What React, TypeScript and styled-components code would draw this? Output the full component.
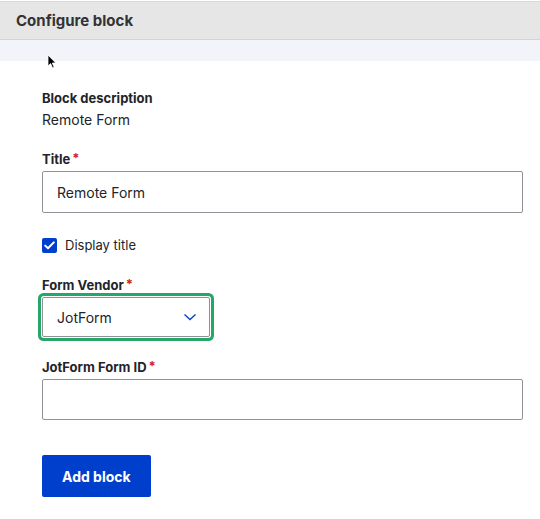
import React from 'react';
import styled, { createGlobalStyle } from 'styled-components';

const GlobalStyle = createGlobalStyle`
  html, body {
    margin: 0;
    padding: 0;
    background: #fff;
    font-family: Inter, "Noto Sans", "Liberation Sans", sans-serif;
    color: #232429;
  }
`;

const Header = styled.div`
  height: 39px;
  margin-top: 1px;
  border-top: 1px solid #d9d9dc;
  border-bottom: 1px solid #d3d4d9;
  background: #e6e6e7;
  display: flex;
  align-items: center;
  padding: 0 16px;
  box-sizing: border-box;
`;

const HeaderTitle = styled.h2`
  margin: 0;
  font-size: 15px;
  font-weight: 700;
  color: #333;
`;

const Band = styled.div`
  height: 21px;
  background: #f3f4f9;
  position: relative;
`;

const Cursor = styled.svg`
  position: absolute;
  left: 47px;
  top: 14px;
`;

const Form = styled.form`
  padding: 28px 17px 0 42px;
  display: flex;
  flex-direction: column;
`;

const Field = styled.div<{ gap?: number }>`
  display: flex;
  flex-direction: column;
  margin-bottom: ${(p) => p.gap ?? 24}px;
`;

const Label = styled.label`
  font-size: 13px;
  font-weight: 700;
  line-height: 18px;
  height: 18px;
  color: #232429;
  margin-bottom: 3px;
  display: flex;
  align-items: center;
`;

const Required = styled.span`
  color: #d72222;
  margin-left: 2px;
  font-size: 13px;
  line-height: 13px;
  margin-top: -1px;
`;

const Value = styled.div`
  font-size: 14px;
  line-height: 20px;
`;

const TextInput = styled.input<{ h?: number }>`
  box-sizing: border-box;
  height: ${(p) => p.h ?? 42}px;
  width: 100%;
  border: 1px solid #919297;
  border-radius: 2px;
  padding: 0 14px;
  font-family: inherit;
  font-size: 14px;
  color: #232429;
  background: #fff;
  outline: none;
`;

const CheckRow = styled.label`
  display: flex;
  align-items: center;
  gap: 8px;
  height: 16px;
  font-size: 13px;
`;

const CheckBox = styled.span`
  width: 15px;
  height: 15px;
  border-radius: 2px;
  background: #003ecc;
  display: flex;
  align-items: center;
  justify-content: center;
`;

const Select = styled.div`
  box-sizing: border-box;
  align-self: flex-start;
  width: 168px;
  height: 40px;
  border: 1px solid #919297;
  border-radius: 2px;
  box-shadow: 0 0 0 1px #fff, 0 0 0 4px #26a769;
  padding: 0 12px 0 14px;
  display: flex;
  align-items: center;
  justify-content: space-between;
  font-size: 14px;
  background: #fff;
`;

const Button = styled.button`
  align-self: flex-start;
  height: 42px;
  padding: 0 20px;
  background: #003ecc;
  color: #fff;
  border: none;
  border-radius: 2px;
  font-family: inherit;
  font-size: 14px;
  font-weight: 700;
`;

export default function App() {
  return (
    <>
      <GlobalStyle />
      <Header>
        <HeaderTitle>Configure block</HeaderTitle>
      </Header>
      <Band>
        <Cursor width="10" height="15" viewBox="0 0 10 15">
          <path d="M1 1 L1 12 L3.6 9.6 L5.6 14 L7.2 13.3 L5.3 9 L8.8 9 Z" fill="#000" stroke="#fff" strokeWidth="0.8" />
        </Cursor>
      </Band>
      <Form>
        <Field gap={20}>
          <Label>Block description</Label>
          <Value>Remote Form</Value>
        </Field>
        <Field gap={24}>
          <Label>
            Title<Required>*</Required>
          </Label>
          <TextInput defaultValue="Remote Form" />
        </Field>
        <Field gap={23}>
          <CheckRow>
            <CheckBox>
              <svg width="11" height="9" viewBox="0 0 11 9">
                <path d="M1.2 4.6 L4 7.3 L9.8 1.4" fill="none" stroke="#fff" strokeWidth="2" strokeLinecap="round" strokeLinejoin="round" />
              </svg>
            </CheckBox>
            Display title
          </CheckRow>
        </Field>
        <Field gap={21}>
          <Label>
            Form Vendor<Required>*</Required>
          </Label>
          <Select>
            <span>JotForm</span>
            <svg width="14" height="8" viewBox="0 0 14 8">
              <path d="M1.5 1.5 L7 6.5 L12.5 1.5" fill="none" stroke="#003ecc" strokeWidth="1.3" />
            </svg>
          </Select>
        </Field>
        <Field gap={35}>
          <Label>
            JotForm Form ID<Required>*</Required>
          </Label>
          <TextInput h={41} />
        </Field>
        <Button type="button">Add block</Button>
      </Form>
    </>
  );
}
